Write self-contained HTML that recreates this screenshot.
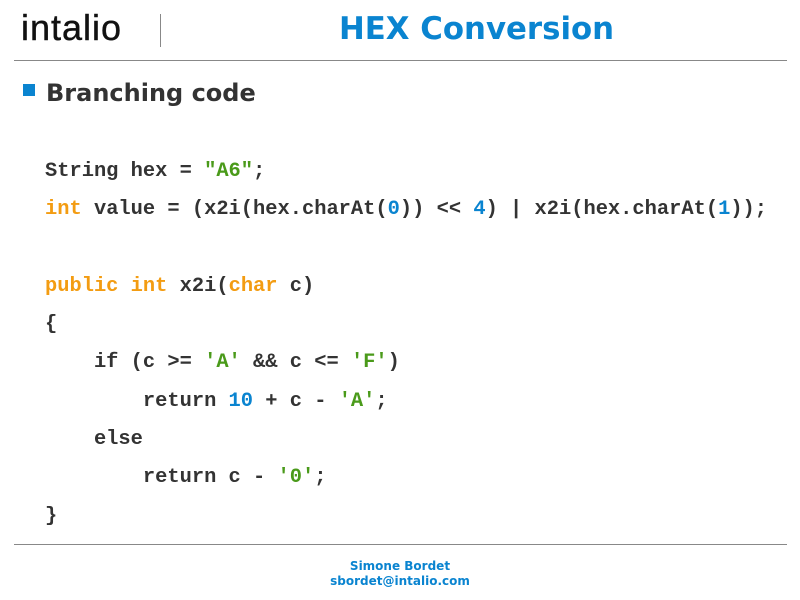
<!DOCTYPE html>
<html><head><style>
body{margin:0;width:800px;height:600px;background:#fff;position:relative;overflow:hidden;font-family:"DejaVu Sans","Liberation Sans",sans-serif}
.logo{position:absolute;left:21px;top:7px;font-family:"Liberation Sans",sans-serif;font-size:36px;color:#111;letter-spacing:1px;-webkit-text-stroke:0.4px #111}
.vl{position:absolute;left:160px;top:14px;width:1px;height:33px;background:#888}
.title{position:absolute;left:339px;top:11px;font-size:30.8px;font-weight:bold;color:#0a84d0;white-space:nowrap}
.hl{position:absolute;left:14px;width:773px;height:1px;background:#888}
.bul{position:absolute;left:23px;top:84px;width:12px;height:12px;background:#0a84d0}
.h2{position:absolute;left:46px;top:79px;font-size:24px;font-weight:bold;color:#333}
pre{position:absolute;left:45px;top:153px;margin:0;font-family:"Liberation Mono",monospace;font-weight:bold;font-size:20.4px;line-height:38.3px;color:#333}
.k{color:#f39c12}.s{color:#4a9a1a}.n{color:#0a84d0}
.foot{position:absolute;left:0;width:800px;top:559px;text-align:center;font-size:12px;font-weight:bold;color:#0a84d0;line-height:15px}
</style></head><body>
<div class="logo">intalio</div>
<div class="vl"></div>
<div class="title">HEX Conversion</div>
<div class="hl" style="top:60px"></div>
<div class="bul"></div>
<div class="h2">Branching code</div>
<pre>String hex = <span class="s">"A6"</span>;
<span class="k">int</span> value = (x2i(hex.charAt(<span class="n">0</span>)) &lt;&lt; <span class="n">4</span>) | x2i(hex.charAt(<span class="n">1</span>));

<span class="k">public</span> <span class="k">int</span> x2i(<span class="k">char</span> c)
{
    if (c &gt;= <span class="s">'A'</span> &amp;&amp; c &lt;= <span class="s">'F'</span>)
        return <span class="n">10</span> + c - <span class="s">'A'</span>;
    else
        return c - <span class="s">'0'</span>;
}</pre>
<div class="hl" style="top:544px"></div>
<div class="foot">Simone Bordet<br>sbordet@intalio.com</div>
</body></html>
